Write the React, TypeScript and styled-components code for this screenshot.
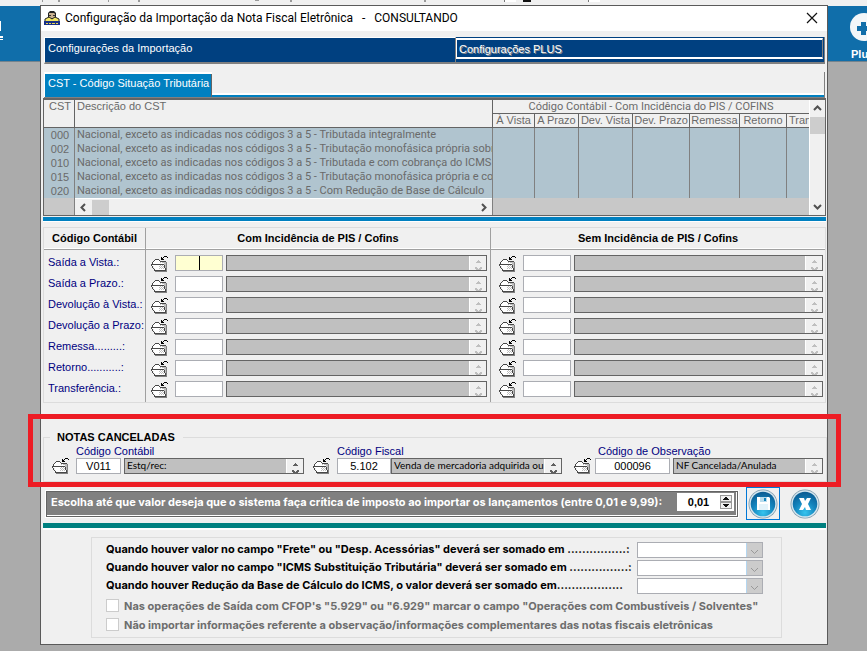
import React from "react";
import styled, { createGlobalStyle } from "styled-components";

const ui = '"Liberation Sans", Arial, sans-serif';
const narrow = 'Roboto, "Liberation Sans", sans-serif';
const small = 'Lato, "Liberation Sans", sans-serif';
const heavy = 'Inter, "Liberation Sans", sans-serif';

const Global = createGlobalStyle`
  *, *::before, *::after { box-sizing: border-box; }
  html, body { margin: 0; background: #ababab; }
  body { font: 11px/14px ${ui}; color: #000; overflow: hidden; }
  button, input, select { font: inherit; color: inherit; margin: 0; padding: 0; border-radius: 0; }
  button { border: 0; background: none; display: block; }
  svg { display: block; }
`;

const Desktop = styled.div`
  position: relative;
  min-height: 100vh;
  overflow: hidden;
`;
const TopStrip = styled.div`
  height: 6px;
  background: #f0f0f0;
`;
const Banner = styled.header`
  display: flex;
  justify-content: space-between;
  height: 56px;
  overflow: hidden;
  background: #106eaa;
  border-bottom: 1px solid #74838d;
`;
const PlusButton = styled.button`
  width: 28px;
  margin-right: -12px;
  padding-top: 6px;
  color: #fff;
  font-weight: bold;
  text-align: left;
  svg { margin: 0 0 5px -2px; }
`;

const Window = styled.main`
  position: absolute;
  top: 5px;
  left: 40px;
  right: 39px;
  background: #f0f0f0;
  border: 1px solid #5a5a5a;
  padding-bottom: 6px;
`;
const TitleBar = styled.div`
  display: flex;
  align-items: center;
  gap: 5px;
  height: 25px;
  padding: 0 9px 1px 3px;
  background: #fff;
  h1 {
    flex: 1;
    margin: 0;
    font: 12px/16px ${narrow};
    white-space: pre;
  }
`;
const MainTabs = styled.div`
  display: grid;
  grid-template-columns: 411px 1fr;
  height: 27px;
  margin: 6px 2px 0 3px;
  border-left: 1px solid #fff;
  border-right: 1px solid #808080;
  border-bottom: 2px solid #808080;
  background: #004080;
`;
const MainTab = styled.button<{ $off?: boolean }>`
  text-align: left;
  color: #fff;
  padding: 0 0 5px 3px;
  border-top: 1px solid #fff;
  border-right: ${p => (p.$off ? "0" : "1px solid #808080")};
  ${p =>
    p.$off &&
    `margin: 1px 1px 3px 0; padding: 0 0 0 2px;
     border-top: 2px solid #fff; border-left: 1px solid #fff;
     border-bottom: 2px solid #fff; border-right: 1px solid #808080;
     text-shadow: 1px 1px 0 #8c8c8c;`}
`;
const SubTabs = styled.div`
  display: flex;
  height: 26px;
  margin: 8px 2px 0 3px;
  border-bottom: 1px solid #808080;
  border-right: 1px solid #808080;
`;
const SubTab = styled.button`
  padding: 0 3px 6px 3px;
  color: #fff;
  background: #0080c0;
  border-top: 2px solid #fff;
  border-left: 1px solid #fff;
  box-shadow: inset -1px 0 #646464;
`;
const SubTabRest = styled.div`
  flex: 1;
  margin-top: 21px;
  border-top: 2px solid #fff;
  background: #0080c0;
`;

const GridFrame = styled.div`
  display: grid;
  grid-template-columns: 1fr 16px;
  margin: 0 1px 0 2px;
  border: 1px solid #646464;
  border-top-width: 2px;
`;
const CstTable = styled.table`
  width: 100%;
  table-layout: fixed;
  border-collapse: separate;
  border-spacing: 0;
  color: #6a6a6a;
  th, td {
    padding: 0 0 0 2px;
    height: 14px;
    font-weight: normal;
    line-height: 13px;
    text-align: left;
    white-space: nowrap;
    overflow: hidden;
    border-right: 1px solid #808080;
  }
  th { border-bottom: 1px solid #646464; border-right-color: #646464; vertical-align: top; background: #f0f0f0; }
  td { background: #b0c4cf; line-height: 14px; }
  tbody td:nth-child(2), th.group { font-family: ${narrow}; }
  tfoot td { background: #c8c8c8; height: 17px; padding: 0; }
  tr > :first-child:not(.col) { text-align: center; }
  tr > .mid { text-align: center; padding: 0; }
  tr > .last { border-right: 0; }
`;
const HScroll = styled.div`
  display: grid;
  grid-template-columns: 17px 17px 1fr 17px;
  height: 17px;
  align-items: center;
  justify-items: center;
  background: #f0f0f0;
  border-top: 1px solid #fff;
  i { width: 17px; height: 15px; background: #cdcdcd; }
`;
const VScroll = styled.div`
  display: flex;
  flex-direction: column;
  align-items: center;
  border-left: 1px solid #fff;
  svg { margin: 4px 0; }
  i { width: 15px; height: 17px; margin-bottom: auto; background: #cdcdcd; }
`;
const Bar = styled.div<{ $teal?: boolean }>`
  height: ${p => (p.$teal ? 7 : 5)}px;
  margin: ${p => (p.$teal ? "3px 1px 0 2px" : "1px 1px 0 2px")};
  background: ${p => (p.$teal ? "#008080" : "#0080c0")};
  border-bottom: ${p => (p.$teal ? 2 : 1)}px solid #fff;
`;

const Codes = styled.section`
  display: grid;
  grid-template-columns: 102px 345px 1fr;
  margin: 5px 1px 0 2px;
  border: 1px solid #dcdcdc;
`;
const CodesHead = styled.h2<{ $last?: boolean }>`
  margin: 0;
  height: 22px;
  font: bold 11px/20px ${ui};
  text-align: center;
  border-bottom: 1px solid #a0a0a0;
  box-shadow: inset 0 -1px #fff;
  border-right: ${p => (p.$last ? "0" : "1px solid #a0a0a0")};
`;
const CodesCol = styled.div<{ $side?: "mid" | "end" }>`
  display: flex;
  flex-direction: column;
  gap: 5px;
  padding: 5px ${p => (p.$side === "mid" ? 3 : p.$side === "end" ? 2 : 0)}px 5px ${p => (p.$side === "end" ? 8 : p.$side ? 5 : 4)}px;
  border-right: ${p => (p.$side === "end" ? "0" : "1px solid #a0a0a0")};
`;
const CodeName = styled.div`
  height: 16px;
  color: #000080;
  white-space: nowrap;
`;
const FieldRow = styled.div`
  display: grid;
  grid-template-columns: 24px 51px 1fr;
  height: 16px;
`;
const CodeInput = styled.input<{ $focus?: boolean }>`
  display: block;
  width: 100%;
  min-width: 0;
  height: 16px;
  text-align: center;
  background: ${p => (p.$focus ? "#ffffd2" : "#fff")};
  border: 1px solid #abadb3;
  outline: 0;
`;
const Caret = styled.span`
  position: absolute;
  left: 50%;
  top: 1px;
  width: 1px;
  height: 14px;
  background: #000;
`;
const CodeCell = styled.div`
  position: relative;
  margin-right: 3px;
`;
const Memo = styled.div`
  display: grid;
  grid-template-columns: 1fr 17px;
  height: 16px;
  background: #c0c0c0;
  border: 1px solid #646464;
  overflow: hidden;
  input {
    min-width: 0;
    height: 12px;
    padding-left: 2px;
    border: 0;
    background: none;
    font: 10px ${small};
    outline: 0;
  }
  span { display: block; background: #f0f0f0; border-left: 1px solid #fff; }
  svg { margin: 2px 0 0 4px; }
`;

const Cancelled = styled.section`
  position: relative;
  display: grid;
  grid-template-columns: 261px 261px 1fr;
  margin: 34px 0 0 2px;
  padding: 6px 3px 7px 8px;
  border: 1px solid #dcdcdc;
`;
const CancelledTitle = styled.h2`
  position: absolute;
  top: -8px;
  left: 6px;
  margin: 0;
  padding: 0 8px 0 7px;
  background: #f0f0f0;
  font: bold 11px/14px ${ui};
`;
const Highlight = styled.div`
  position: absolute;
  inset: -24px -15px -6px -16px;
  border: 5px solid #ed1c24;
  pointer-events: none;
`;
const CancelGroup = styled.div<{ $end?: number }>`
  padding-right: ${p => p.$end ?? 0}px;
  > label { display: block; padding-left: 24px; height: 14px; line-height: 14px; color: #000080; white-space: nowrap; }
`;
const CancelRow = styled.div<{ $cols: string }>`
  display: grid;
  grid-template-columns: ${p => p.$cols};
  height: 16px;
  > button { margin-top: -2px; }
`;

const LimitRow = styled.div`
  display: grid;
  grid-template-columns: 1fr 34px 34px;
  align-items: center;
  column-gap: 8px;
  height: 33px;
  margin: 5px 5px 0 5px;
`;
const LimitBar = styled.div`
  display: flex;
  align-items: center;
  justify-content: space-between;
  height: 26px;
  padding: 0 3px 3px 4px;
  background: #808080;
  border: 1px solid #646464;
  outline: 1px solid #fff;
  box-shadow: inset 0 -1px #fff, inset -1px 0 #fff;
  color: #fff;
  font: bold 11px/14px ${heavy};
  label { white-space: nowrap; }
`;
const Spinner = styled.div`
  display: flex;
  align-items: center;
  width: 57px;
  height: 18px;
  padding-right: 2px;
  background: #fff;
  color: #000;
  font: bold 11px/14px ${ui};
  input { flex: 1; min-width: 0; text-align: center; border: 0; background: none; outline: 0; }
`;
const RoundButton = styled.button<{ $focus?: boolean }>`
  display: grid;
  place-items: center;
  width: 34px;
  height: 33px;
  border: 1px solid ${p => (p.$focus ? "#0078d7" : "transparent")};
`;

const Options = styled.section`
  margin: 7px 45px 0 50px;
  padding: 4px 18px 3px 14px;
  border: 1px solid #dcdcdc;
  font: bold 11px/14px ${heavy};
`;
const OptionRow = styled.div`
  display: grid;
  grid-template-columns: 1fr 126px;
  gap: 5px;
  height: 16px;
  margin-bottom: 2px;
  label { white-space: nowrap; }
`;
const Picker = styled.div`
  position: relative;
  height: 16px;
  select {
    appearance: none;
    display: block;
    width: 100%;
    height: 16px;
    background: linear-gradient(to left, #ccc 15px, #b4d6f0 15px, #b4d6f0 16px, #fff 16px);
    border: 1px solid #abadb3;
    opacity: 1;
  }
  svg { position: absolute; right: 4px; top: 7px; pointer-events: none; }
`;
const CheckRow = styled.label`
  display: flex;
  align-items: center;
  gap: 5px;
  height: 19px;
  color: #6d6d6d;
  white-space: nowrap;
  input { appearance: none; width: 13px; height: 13px; background: #fff; border: 1px solid #ccc; }
`;

const Folder = () => (
  <svg width="17" height="17" viewBox="0 0 17 17" shapeRendering="crispEdges" aria-hidden="true">
    <path d="M4 16h12v1H4zM15 7h1v9h-1z" fill="#808080" />
    <path d="M3 6h1V5h4v1h7v1h-2v3h1v2h1v3H4v-2H3v-2H1V8h1z" fill="#fff" />
    <path d="M11 7h4v8h-1v-4h-1V8h-2z" fill="#bdbdbd" />
    <path d="M9 10h1v1H9zM11 10h1v1h-1zM8 11h1v1H8zM10 11h1v1h-1zM12 11h1v1h-1zM9 12h1v1H9zM11 12h1v1h-1zM8 13h1v1H8zM10 13h1v1h-1zM12 13h1v1h-1zM9 7h1v1H9z" fill="#bdbdbd" />
    <path d="M4 4h4v1H4zM3 5h1v1H3zM8 5h1v1H8zM9 6h6v1H9zM2 6h1v1H2zM1 7h1v2H1zM0 9h13v1H0zM0 10h1v1H0zM1 11h1v2H1zM2 13h1v1H2zM3 14h1v1H3zM3 15h12v1H3zM13 10h1v3h-1zM14 13h1v2h-1z" fill="#484848" />
    <path d="M10 2h1v1h-1zM10 3h2v1h-2zM10 4h3v1h-3zM12 2h1v1h-1zM13 1h3v1h-3zM16 2h1v1h-1z" fill="#000" />
  </svg>
);
const Arrow = ({ dir }: { dir: "up" | "down" | "left" | "right" }) => {
  const d = { up: "M1 6l3.5-3.5L8 6", down: "M1 3l3.5 3.5L8 3", left: "M6 1L2.5 4.5 6 8", right: "M3 1l3.5 3.5L3 8" }[dir];
  return (
    <svg width="9" height="9" viewBox="0 0 9 9" aria-hidden="true">
      <path d={d} fill="none" stroke="#505050" strokeWidth="2" />
    </svg>
  );
};
const MemoBox = ({ label, value = "", active }: { label: string; value?: string; active?: boolean }) => (
  <Memo>
    <input aria-label={label} defaultValue={value} readOnly />
    <span>
      <svg width="9" height="13" viewBox="0 0 9 13" shapeRendering="crispEdges" fill={active ? "#606060" : "#bfbfbf"} aria-hidden="true">
        <path d="M4 2h1v1H4zM3 3h3v1H3zM2 4h5v1H2zM1 9h2v1H1zM6 9h2v1H6zM1 10h3v1H1zM5 10h3v1H5zM2 11h5v1H2z" />
      </svg>
    </span>
  </Memo>
);
const IconButton = ({ label }: { label: string }) => (
  <button type="button" aria-label={label}><Folder /></button>
);

const names = ["Saída a Vista.:", "Saída a Prazo.:", "Devolução à Vista.:", "Devolução a Prazo:", "Remessa.........:", "Retorno...........:", "Transferência.:"];
const cst = [
  ["000", "Nacional, exceto as indicadas nos códigos 3 a 5 - Tributada integralmente"],
  ["002", "Nacional, exceto as indicadas nos códigos 3 a 5 - Tributação monofásica própria sobre"],
  ["010", "Nacional, exceto as indicadas nos códigos 3 a 5 - Tributada e com cobrança do ICMS"],
  ["015", "Nacional, exceto as indicadas nos códigos 3 a 5 - Tributação monofásica própria e com"],
  ["020", "Nacional, exceto as indicadas nos códigos 3 a 5 - Com Redução de Base de Cálculo"],
];
const targets = ["À Vista", "A Prazo", "Dev. Vista", "Dev. Prazo", "Remessa", "Retorno", "Transf."];
const widths = [42, 44, 54, 57, 50, 47, 22];
const sums = [
  'Quando houver valor no campo "Frete" ou "Desp. Acessórias" deverá ser somado em ................:',
  'Quando houver valor no campo "ICMS Substituição Tributária" deverá ser somado em ................:',
  "Quando houver Redução da Base de Cálculo do ICMS, o valor deverá ser somado em..................",
];

const CodeFields = ({ group, first }: { group: string; first?: boolean }) => (
  <CodesCol $side={first ? "mid" : "end"}>
    {names.map((n, i) => (
      <FieldRow key={n}>
        <IconButton label={`Pesquisar ${n} ${group}`} />
        <CodeCell>
          <CodeInput aria-label={`${n} ${group}`} $focus={first && i === 0} />
          {first && i === 0 && <Caret />}
        </CodeCell>
        <MemoBox label={`Descrição ${n} ${group}`} />
      </FieldRow>
    ))}
  </CodesCol>
);

const Disc = ({ children, id }: { children: React.ReactNode; id: string }) => (
  <svg width="30" height="30" viewBox="0 0 30 30" aria-hidden="true">
    <defs>
      <radialGradient id={id} cx="50%" cy="85%" r="80%">
        <stop offset="0" stopColor="#35c4ee" />
        <stop offset=".55" stopColor="#1384bd" />
        <stop offset="1" stopColor="#0b5f96" />
      </radialGradient>
    </defs>
    <circle cx="15" cy="15" r="14.5" fill="#7d9aab" />
    <circle cx="15" cy="15" r="13.7" fill="#d5e6ef" />
    <circle cx="15" cy="15" r="12.3" fill={`url(#${id})`} />
    {children}
  </svg>
);

export default function App() {
  return (
    <Desktop>
      <Global />
      <TopStrip>
        <svg width="600" height="6" viewBox="0 0 600 6" aria-hidden="true">
          <path d="M42 0h1v2h-1zM58 0h2v2h-2zM108 0h1v2h-1zM138 0h2v2h-2zM255 0h4v1h-4zM290 0h2v2h-2zM424 0h2v2h-2z" fill="#999" />
          <path d="M504 0h12v2h-12zM588 0h12v2h-12z" fill="#fff" />
          <path d="M504 0h1v2h-1zM588 0h1v2h-1z" fill="#777" />
          <path d="M523 0h8v2h-8z" fill="#111" />
        </svg>
      </TopStrip>
      <Banner>
        <svg width="4" height="56" viewBox="0 0 4 56" aria-hidden="true">
          <path d="M0 15h1v10H0zM0 30h3v2H0zM0 33h3v1H0z" fill="#fff" />
        </svg>
        <PlusButton type="button">
          <svg width="28" height="30" viewBox="0 0 28 30" aria-hidden="true">
            <circle cx="15" cy="15" r="14" fill="#f2f6f9" />
            <path d="M12 10h5v4h4v5h-4v4h-5v-4H8v-5h4z" fill="#106eaa" />
          </svg>
          Plus
        </PlusButton>
      </Banner>

      <Window>
        <TitleBar>
          <svg width="16" height="16" viewBox="0 0 16 16" aria-hidden="true">
            <path d="M4 6V3l2-2h4l2 2v5H4z" fill="#222" />
            <path d="M5 3h5l1 1v4l-2 2H7L5 8z" fill="#c9b08f" />
            <path d="M5 5h2v1H5zM9 5h2v1H9zM7 8h2v1H7z" fill="#333" />
            <path d="M1 9l4-2 3 2 3-2 4 2v3H1z" fill="#f4e763" stroke="#222" strokeWidth="1" />
            <path d="M0 11h16v4H0z" fill="#182f86" />
            <path d="M2 13h2v1H2zM5 13h2v1H5zM8 13h3v1H8zM12 13h2v1h-2z" fill="#e9d852" />
          </svg>
          <h1>{"Configuração da Importação da Nota Fiscal Eletrônica   -   CONSULTANDO"}</h1>
          <button type="button" aria-label="Fechar">
            <svg width="12" height="12" viewBox="0 0 12 12" aria-hidden="true">
              <path d="M1 1l10 10M11 1L1 11" stroke="#111" strokeWidth="1.2" />
            </svg>
          </button>
        </TitleBar>

        <MainTabs>
          <MainTab type="button">Configurações da Importação</MainTab>
          <MainTab type="button" $off>Configurações PLUS</MainTab>
        </MainTabs>
        <SubTabs>
          <SubTab type="button">CST - Código Situação Tributária</SubTab>
          <SubTabRest />
        </SubTabs>

        <GridFrame>
          <CstTable>
            <colgroup>
              <col style={{ width: 31 }} />
              <col />
              {widths.map((w, i) => <col key={i} style={{ width: w }} />)}
            </colgroup>
            <thead>
              <tr>
                <th rowSpan={2}>CST</th>
                <th rowSpan={2}>Descrição do CST</th>
                <th colSpan={7} className="mid last group">Código Contábil - Com Incidência do PIS / COFINS</th>
              </tr>
              <tr>
                {targets.map((t, i) => <th key={t} className={i === 6 ? "col last" : "col mid"}>{t}</th>)}
              </tr>
            </thead>
            <tbody>
              {cst.map(([code, text]) => (
                <tr key={code}>
                  <td>{code}</td>
                  <td>{text}</td>
                  {targets.map((t, i) => <td key={t} className={i === 6 ? "last" : undefined} />)}
                </tr>
              ))}
            </tbody>
            <tfoot>
              <tr>
                <td />
                <td><HScroll><Arrow dir="left" /><i /><b /><Arrow dir="right" /></HScroll></td>
                <td colSpan={7} className="last" />
              </tr>
            </tfoot>
          </CstTable>
          <VScroll><Arrow dir="up" /><i /><Arrow dir="down" /></VScroll>
        </GridFrame>
        <Bar />

        <Codes>
          <CodesHead>Código Contábil</CodesHead>
          <CodesHead>Com Incidência de PIS / Cofins</CodesHead>
          <CodesHead $last>Sem Incidência de PIS / Cofins</CodesHead>
          <CodesCol>{names.map(n => <CodeName key={n}>{n}</CodeName>)}</CodesCol>
          <CodeFields group="Com Incidência" first />
          <CodeFields group="Sem Incidência" />
        </Codes>

        <Cancelled>
          <CancelledTitle>NOTAS CANCELADAS</CancelledTitle>
          <CancelGroup $end={9}>
            <label htmlFor="contabil">Código Contábil</label>
            <CancelRow $cols="24px 45px 3px 1fr">
              <IconButton label="Pesquisar código contábil" />
              <CodeInput id="contabil" defaultValue="V011" />
              <i />
              <MemoBox label="Descrição contábil" value="Estq/rec:" active />
            </CancelRow>
          </CancelGroup>
          <CancelGroup $end={12}>
            <label htmlFor="fiscal">Código Fiscal</label>
            <CancelRow $cols="24px 54px 1fr">
              <IconButton label="Pesquisar código fiscal" />
              <CodeInput id="fiscal" defaultValue="5.102" />
              <MemoBox label="Descrição fiscal" value="Venda de mercadoria adquirida ou" active />
            </CancelRow>
          </CancelGroup>
          <CancelGroup>
            <label htmlFor="obs">Código de Observação</label>
            <CancelRow $cols="21px 75px 3px 1fr">
              <IconButton label="Pesquisar observação" />
              <CodeInput id="obs" defaultValue="000096" />
              <i />
              <MemoBox label="Descrição observação" value="NF Cancelada/Anulada" />
            </CancelRow>
          </CancelGroup>
          <Highlight />
        </Cancelled>

        <LimitRow>
          <LimitBar>
            <label htmlFor="limit">Escolha até que valor deseja que o sistema faça crítica de imposto ao importar os lançamentos (entre 0,01 e 9,99):</label>
            <Spinner>
              <input id="limit" defaultValue="0,01" />
              <svg width="12" height="14" viewBox="0 0 12 14" shapeRendering="crispEdges" aria-hidden="true">
                <path d="M.5.5h11v6H.5zM.5 7.5h11v6H.5z" fill="#f0f0f0" stroke="#999" />
                <path d="M5 2h2v1h1v1h1v1H3V4h1V3h1zM3 9h6v1H8v1H7v1H5v-1H4v-1H3z" fill="#111" />
              </svg>
            </Spinner>
          </LimitBar>
          <RoundButton type="button" aria-label="Salvar" $focus>
            <Disc id="discSave">
              <path d="M9 8h12l1 1v12H9z" fill="#fff" />
              <path d="M12 8h7v5h-7z" fill="#b9dcec" />
              <path d="M16 9h2v3h-2z" fill="#1384bd" />
              <path d="M11 15h9v6h-9z" fill="#e3f3fa" />
            </Disc>
          </RoundButton>
          <RoundButton type="button" aria-label="Cancelar">
            <Disc id="discCancel">
              <path d="M9 9h5l1 3 2-3h4l-3 6 3 6h-5l-1-3-2 3H9l3-6z" fill="#fff" />
            </Disc>
          </RoundButton>
        </LimitRow>
        <Bar $teal />

        <Options>
          {sums.map((s, i) => (
            <OptionRow key={s}>
              <label htmlFor={`sum${i}`}>{s}</label>
              <Picker>
                <select id={`sum${i}`} disabled />
                <svg width="9" height="6" viewBox="0 0 9 6" aria-hidden="true">
                  <path d="M1 1l3.500 3.500L8 1" fill="none" stroke="#999" />
                </svg>
              </Picker>
            </OptionRow>
          ))}
          <CheckRow><input type="checkbox" disabled />Nas operações de Saída com CFOP's "5.929" ou "6.929" marcar o campo "Operações com Combustíveis / Solventes"</CheckRow>
          <CheckRow><input type="checkbox" disabled />Não importar informações referente a observação/informações complementares das notas fiscais eletrônicas</CheckRow>
        </Options>
      </Window>
    </Desktop>
  );
}
